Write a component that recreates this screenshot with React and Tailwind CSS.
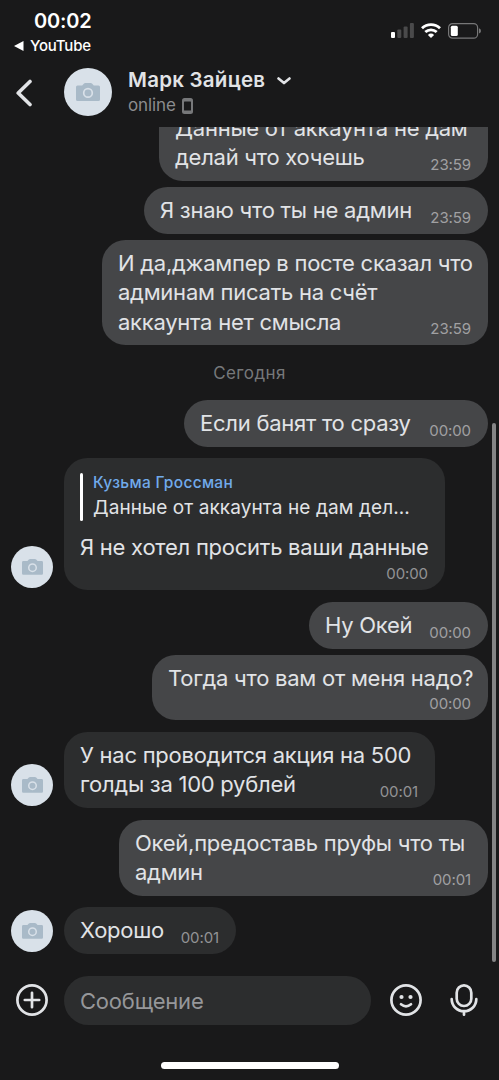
const messages = [
  {
    id: 1,
    out: true,
    time: "23:59",
    lines: ["Данные от аккаунта не дам", "делай что хочешь"],
    box: "w-[329px] h-[76px] -mt-[22px]",
  },
  {
    id: 2,
    out: true,
    time: "23:59",
    lines: ["Я знаю что ты не админ"],
    box: "w-[344px] h-[47px] mt-[6px]",
  },
  {
    id: 3,
    out: true,
    time: "23:59",
    lines: ["И да,джампер в посте сказал что", "админам писать на счёт", "аккаунта нет смысла"],
    box: "w-[386px] h-[105px] mt-[6px]",
  },
  { id: 4, date: "Сегодня" },
  {
    id: 5,
    out: true,
    time: "00:00",
    lines: ["Если банят то сразу"],
    box: "w-[304px] h-[47px]",
  },
  {
    id: 6,
    time: "00:00",
    quote: { author: "Кузьма Гроссман", text: "Данные от аккаунта не дам дел..." },
    lines: ["Я не хотел просить ваши данные"],
    box: "w-[381px] h-[132px] mt-[11px]",
  },
  {
    id: 7,
    out: true,
    time: "00:00",
    lines: ["Ну Окей"],
    box: "w-[179px] h-[47px] mt-[12px]",
  },
  {
    id: 8,
    out: true,
    time: "00:00",
    lines: ["Тогда что вам от меня надо?"],
    box: "w-[336px] h-[65px] mt-[6px]",
  },
  {
    id: 9,
    time: "00:01",
    lines: ["У нас проводится акция на 500", "голды за 100 рублей"],
    box: "w-[371px] h-[76px] mt-[12px]",
  },
  {
    id: 10,
    out: true,
    time: "00:01",
    lines: ["Окей,предоставь пруфы что ты", "админ"],
    box: "w-[369px] h-[76px] mt-[12px]",
  },
  {
    id: 11,
    time: "00:01",
    lines: ["Хорошо"],
    box: "w-[172px] h-[47px] mt-[11px]",
  },
];

function Avatar({ className }) {
  return (
    <div className={`flex shrink-0 items-center justify-center rounded-full bg-[#d9e1e9] ${className}`}>
      <svg viewBox="0 0 24 18" className="w-1/2" fill="none">
        <path
          d="M1.500 2.400h4.700L7.800.7Q8.400 0 9.300 0h5.400q.9 0 1.500.7l1.600 1.700h4.700q1.500 0 1.500 1.500v12.600q0 1.500-1.500 1.500h-21Q0 18 0 16.500V3.900q0-1.500 1.500-1.500Z"
          fill="#a9bac8"
        />
        <circle cx="12" cy="9.900" r="4.300" stroke="#d9e1e9" strokeWidth="1.700" />
      </svg>
    </div>
  );
}

function StatusBar() {
  return (
    <div className="flex h-[56px] justify-between pl-[14px] pr-[18px] text-white">
      <div>
        <div className="mt-[8px] pl-[20px] text-[20px] font-semibold leading-[26px] tracking-[-0.2px]">00:02</div>
        <div className="mt-[3px] flex items-center gap-[6px] text-[15px] font-medium leading-[18px] tracking-[-0.2px]">
          <svg width="10" height="10" viewBox="0 0 10 10" fill="white">
            <path d="M0 5 9.500 0v10Z" />
          </svg>
          YouTube
        </div>
      </div>
      <div className="mt-[22px] flex h-[17px] items-center gap-[7px]">
        <svg width="23" height="15" viewBox="0 0 23 15">
          <rect x="0" y="9" width="4" height="6" rx="1" fill="#fff" />
          <rect x="6.300" y="6.500" width="4" height="8.500" rx="1" fill="#4a4a4b" />
          <rect x="12.600" y="3.500" width="4" height="11.500" rx="1" fill="#4a4a4b" />
          <rect x="18.900" y="0" width="4" height="15" rx="1" fill="#4a4a4b" />
        </svg>
        <svg width="20" height="15" viewBox="0 0 20 15" fill="none" stroke="#fff" strokeWidth="2.800">
          <path d="M1 5.300a13 13 0 0 1 18 0" />
          <path d="M4.300 9.100a8.200 8.200 0 0 1 11.400 0" />
          <path d="M10 15 6.900 11.900a4.400 4.400 0 0 1 6.200 0Z" fill="#fff" stroke="none" />
        </svg>
        <svg width="33" height="16" viewBox="0 0 33 16">
          <rect x="0.600" y="0.600" width="29" height="14.600" rx="4" fill="none" stroke="#777778" strokeWidth="1.200" />
          <rect x="2.800" y="2.800" width="7" height="10.200" rx="1.500" fill="#fff" />
          <path d="M31 5.300q2 .7 2 2.600t-2 2.600Z" fill="#777778" />
        </svg>
      </div>
    </div>
  );
}

function Header() {
  return (
    <div className="flex h-[71px] items-start pl-[15px]">
      <svg className="mt-[23px]" width="18" height="28" viewBox="0 0 18 28" fill="none">
        <path d="M15 2.500 3.200 14 15 25.500" stroke="#e1e3e6" strokeWidth="3.600" strokeLinecap="round" strokeLinejoin="round" />
      </svg>
      <Avatar className="ml-[31px] mt-[12px] size-[48px]" />
      <div className="ml-[16px] mt-[11px]">
        <div className="flex items-center text-[#e1e3e6]">
          <span className="whitespace-nowrap text-[20.500px] font-semibold leading-[26px] tracking-[0.25px]">Марк Зайцев</span>
          <svg className="ml-[12px] mt-[2px]" width="14" height="8" viewBox="0 0 14 8" fill="none">
            <path d="m1.500 1.500 5.500 4.600 5.500-4.600" stroke="currentColor" strokeWidth="2.600" strokeLinecap="round" strokeLinejoin="round" />
          </svg>
        </div>
        <div className="flex items-center gap-[6px] text-[17px] leading-[25px] tracking-[-0.1px] text-[#8b8c8e]">
          online
          <svg width="11" height="16" viewBox="0 0 11 16">
            <rect width="11" height="16" rx="2.500" fill="#77787a" />
            <rect x="2" y="3.500" width="7" height="9" rx="0.500" fill="#19191a" />
          </svg>
        </div>
      </div>
    </div>
  );
}

function Quote({ author, text }) {
  return (
    <div className="mb-[12px] mt-[6px] flex h-[48px] gap-[10px]">
      <div className="w-[3px] rounded-full bg-white" />
      <div className="whitespace-nowrap">
        <div className="mt-[-1px] text-[15.500px] font-medium leading-[21px] tracking-[0.3px] text-[#71aaeb]">{author}</div>
        <div className="mt-[1px] text-[19px] leading-[27px] tracking-[0.1px] text-[#e1e3e6]">{text}</div>
      </div>
    </div>
  );
}

function Message({ out, time, lines, quote, box }) {
  return (
    <div className={`flex shrink-0 items-end ${out ? "justify-end pr-[11px]" : "pl-[11px]"}`}>
      {!out && <Avatar className="mb-[2px] mr-[11px] size-[42px]" />}
      <div
        className={`relative shrink-0 rounded-[23.500px] px-[16px] pt-[9px] ${box} ${out ? "bg-[#454648]" : "bg-[#2c2d2e]"}`}
      >
        {quote && <Quote {...quote} />}
        {lines.map((line) => (
          <div key={line} className="whitespace-nowrap text-[22px] leading-[29.300px] tracking-[-0.25px] text-[#e1e3e6]">
            {line}
          </div>
        ))}
        <span className={`absolute bottom-[6px] right-[17px] text-[15px] leading-[20px] tracking-[-0.1px] ${out ? "text-[#a0a0a2]" : "text-[#939395]"}`}>
          {time}
        </span>
      </div>
    </div>
  );
}

function Composer() {
  return (
    <div className="flex h-[49px] shrink-0 items-center pl-[16px] text-[#e1e3e6]">
      <svg className="-mt-[2px]" width="32" height="32" viewBox="0 0 32 32" fill="none" stroke="currentColor" strokeWidth="2.700" strokeLinecap="round">
        <circle cx="16" cy="16" r="14.600" />
        <path d="M16 8.800v14.400M8.800 16h14.400" />
      </svg>
      <div className="ml-[16px] flex h-[49px] w-[307px] items-center rounded-full bg-[#2c2d2e] pl-[16px] pt-[2px] text-[22px] tracking-[-0.2px] text-[#96979a]">
        Сообщение
      </div>
      <svg className="-mt-[2px] ml-[19px]" width="32" height="32" viewBox="0 0 32 32" fill="none" stroke="currentColor" strokeWidth="2.700" strokeLinecap="round">
        <circle cx="16" cy="16" r="14.600" />
        <circle cx="11.500" cy="13" r="2.100" fill="currentColor" stroke="none" />
        <circle cx="20.500" cy="13" r="2.100" fill="currentColor" stroke="none" />
        <path d="M11 20.300q5 4 10 0" />
      </svg>
      <svg className="-mt-[2px] ml-[28px]" width="28" height="32" viewBox="0 0 28 32" fill="none" stroke="currentColor" strokeWidth="2.700" strokeLinecap="round">
        <rect x="6.700" y="1.400" width="14.600" height="20.600" rx="7.300" />
        <path d="M1.700 15.200a12.300 12 0 0 0 24.600 0M14 27.200v3.500" />
      </svg>
    </div>
  );
}

export default function App() {
  return (
    <div className="flex h-[1080px] w-[499px] flex-col overflow-hidden bg-[#19191a] font-['Inter','Noto_Sans',sans-serif]">
      <StatusBar />
      <Header />
      <div className="relative flex h-[849px] shrink-0 flex-col overflow-hidden">
        {messages.map((m) =>
          m.date ? (
            <div key={m.id} className="h-[55px] shrink-0 text-center text-[17px] leading-[56px] tracking-[0.4px] text-[#76787a]">
              {m.date}
            </div>
          ) : (
            <Message key={m.id} {...m} />
          )
        )}
        <div className="absolute right-[3px] top-[296px] h-[539px] w-[4px] rounded-full bg-[#858586]" />
      </div>
      <Composer />
      <div className="mx-auto mt-[37px] h-[7px] w-[178px] shrink-0 rounded-full bg-white" />
    </div>
  );
}
